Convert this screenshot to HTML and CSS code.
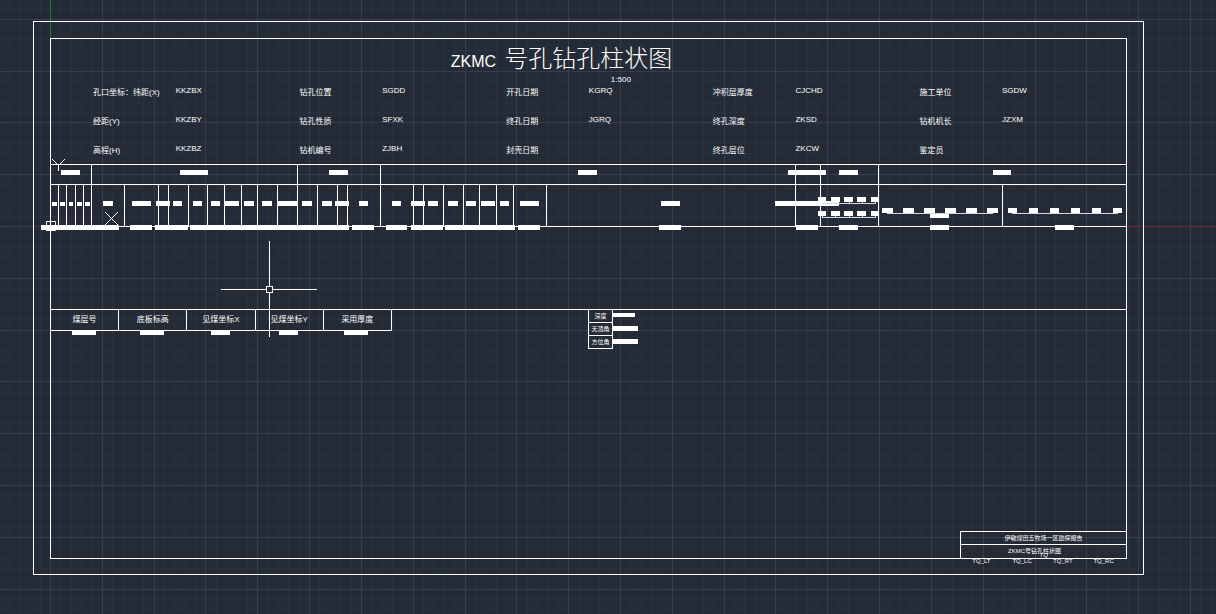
FILE: index.html
```html
<!DOCTYPE html>
<html lang="zh-CN">
<head>
<meta charset="utf-8">
<meta name="viewport" content="width=device-width, initial-scale=1">
<title>ZKMC 号孔钻孔柱状图</title>
<link rel="stylesheet" href="styles.css">
</head>
<body>
<svg class="grid" aria-hidden="true">
  <path class="grid-minor"/>
  <path class="grid-major"/>
  <path class="axis-y" d="M50.5 0V39"/>
  <path class="axis-x" d="M1127 226.5H4000"/>
</svg>
<main class="sheet">
  <div class="frame">
    <header class="heading">
      <h1 class="title"><span class="title-code">ZKMC</span><span class="title-name">号孔钻孔柱状图</span></h1>
      <p class="scale">1:500</p>
    </header>
    <dl class="info">
      <div class="field"><dt>孔口坐标：纬距(X)</dt><dd>KKZBX</dd></div>
      <div class="field"><dt>经距(Y)</dt><dd>KKZBY</dd></div>
      <div class="field"><dt>高程(H)</dt><dd>KKZBZ</dd></div>
      <div class="field"><dt>钻孔位置</dt><dd>SGDD</dd></div>
      <div class="field"><dt>钻孔性质</dt><dd>SFXK</dd></div>
      <div class="field"><dt>钻机编号</dt><dd>ZJBH</dd></div>
      <div class="field"><dt>开孔日期</dt><dd>KGRQ</dd></div>
      <div class="field"><dt>终孔日期</dt><dd>JGRQ</dd></div>
      <div class="field"><dt>封壳日期</dt><dd></dd></div>
      <div class="field"><dt>冲积层厚度</dt><dd>CJCHD</dd></div>
      <div class="field"><dt>终孔深度</dt><dd>ZKSD</dd></div>
      <div class="field"><dt>终孔层位</dt><dd>ZKCW</dd></div>
      <div class="field"><dt>施工单位</dt><dd>SGDW</dd></div>
      <div class="field"><dt>钻机机长</dt><dd>JZXM</dd></div>
      <div class="field"><dt>鉴定员</dt><dd></dd></div>
    </dl>
    <svg class="log" viewBox="51 159 1075 73" aria-hidden="true">
      <!-- horizontal rules and group dividers -->
      <path class="rule" d="M51 164.5H1126M51 184.5H1126M51 226.5H1126M91.5 165V226M297.5 165V226M380.5 165V226M795.5 165V226M820.5 165V226M878.5 165V226"/>
      <!-- column dividers -->
      <path class="rule" d="M58.5 185V226M66.5 185V226M75.5 185V226M83.5 185V226M124.5 185V226M158.5 185V226M168.5 185V226M188.5 185V226M207.5 185V226M224.5 185V226M241.5 185V226M257.5 185V226M277.5 185V226M317.5 185V226M337.5 185V226M347.5 185V226M413.5 185V226M423.5 185V226M443.5 185V226M463.5 185V226M479.5 185V226M496.5 185V226M513.5 185V226M546.5 185V226M1002.5 185V226"/>
      <!-- group marks -->
      <path class="mark" d="M61 172.5h19M180 172.5h28M329 172.5h19M578 172.5h19M788 172.5h38M839 172.5h19M993 172.5h18"/>
      <!-- column marks -->
      <path class="mark-small" d="M52 204h5M60 204h5M69 204h4M77 204h5M85 204h5"/>
      <path class="mark" d="M103 203.5h10M132 203.5h19M156 203.5h14M173 203.5h9M193 203.5h9M211 203.5h9M225 203.5h14M244 203.5h10M262 203.5h10M278 203.5h19M302 203.5h10M322 203.5h10M335 203.5h14M359 203.5h9M392 203.5h9M411 203.5h14M428 203.5h10M448 203.5h10M466 203.5h10M481 203.5h14M500 203.5h9M520 203.5h19M661 203.5h19M775 203.5h64"/>
      <!-- base marks -->
      <path class="mark" d="M41 227.5h78M130 227.5h22M155 227.5h33M190 227.5h159M352 227.5h22M386 227.5h21M411 227.5h32M445 227.5h70M518 227.5h22M659 227.5h22M796 227.5h22M839 227.5h19M930 227.5h19M1055 227.5h19"/>
      <!-- curve scales -->
      <path class="mark" d="M818 199.5h8M831 199.5h9M844 199.5h9M857 199.5h9M871 199.5h8M818 213.5h8M831 213.5h9M844 213.5h9M857 213.5h9M871 213.5h8M882 210.5h11M903 210.5h11M924 210.5h11M945 210.5h11M966 210.5h11M987 210.5h11M930 215.5h19M1008 210.5h9M1029 210.5h9M1050 210.5h9M1071 210.5h9M1092 210.5h9M1113 210.5h9"/>
      <path class="scale-line" d="M822 203.5H876M835.5 202v2M849.5 202v2M862.5 202v2M875.5 202v2M822 217.5H876M822.5 216v2M835.5 216v2M849.5 216v2M862.5 216v2M875.5 216v2M887 213.5H993M1012 213.5H1118"/>
      <!-- UCS icon -->
      <path class="ucs" d="M52 159L58.5 165.5L65 159M58.5 165V171M105 212L118 225M118 212L105 225M46.5 221.5H55.5V230.5H46.5Z"/>
    </svg>
    <section class="lower">
      <table class="seams">
        <tr>
          <th>煤层号<i class="bar bar-wide"></i></th>
          <th>底板标高<i class="bar bar-wide"></i></th>
          <th>见煤坐标X<i class="bar"></i></th>
          <th>见煤坐标Y<i class="bar"></i></th>
          <th>采用厚度<i class="bar bar-wide"></i></th>
        </tr>
      </table>
      <table class="survey">
        <tr><th>深度</th><td><i class="reading reading-depth"></i></td></tr>
        <tr><th>天顶角</th><td><i class="reading"></i></td></tr>
        <tr><th>方位角</th><td><i class="reading"></i></td></tr>
      </table>
    </section>
    <footer class="stamp">
      <p class="stamp-row">伊敏煤田五牧场一区勘探报告</p>
      <p class="stamp-row stamp-name">ZKMC号钻孔柱状图<span class="stamp-tag">TQ</span></p>
      <div class="anchors"><span>TQ_LT</span><span>TQ_LC</span><span>TQ_RT</span><span>TQ_RC</span></div>
    </footer>
  </div>
</main>
<svg class="cursor" viewBox="0 0 96 96" aria-hidden="true">
  <path d="M0 48.5H45M52 48.5H96M48.5 0V45M48.5 52V96M45.5 45.5H51.5V51.5H45.5Z"/>
</svg>
<script src="grid.js"></script>
</body>
</html>
```
FILE: styles.css
```css
* {
  box-sizing: border-box;
}

body {
  margin: 0;
  position: relative;
  min-height: 100vh;
  display: flex;
  background: #242b36;
  color: #fff;
  font-family: "Liberation Sans", "Noto Sans CJK SC", sans-serif;
  font-size: 8px;
  line-height: 12px;
}

h1, p, dl, dd {
  margin: 0;
  font-weight: 400;
}

.grid {
  position: absolute;
  inset: 0;
  width: 100%;
  height: 100%;
  z-index: -1;
}

.grid path {
  fill: none;
  shape-rendering: crispEdges;
}

.grid-minor { stroke: #29313d; }
.grid-major { stroke: #363e4e; }
.grid .axis-y { stroke: #217a2b; }
.grid .axis-x { stroke: #6c2833; }

.sheet {
  flex: 1;
  min-width: 0;
  display: flex;
  margin: 21px 72px 39px 33px;
  padding: 16px 16px 15px;
  border: 1px solid #fff;
}

.frame {
  flex: 1;
  min-width: 0;
  display: flex;
  flex-direction: column;
  border: 1px solid #fff;
}

.heading {
  align-self: center;
  padding-right: 54px;
}

.title {
  display: flex;
  align-items: baseline;
  gap: 8px;
  height: 36px;
  line-height: 40px;
}

.title-code { font-size: 16px; }

.title-name {
  font-size: 24px;
  font-weight: 300;
}

.scale {
  margin-left: 160px;
  height: 10px;
  line-height: 10px;
}

.info {
  display: grid;
  grid-template-rows: repeat(3, 12px);
  grid-auto-flow: column;
  grid-auto-columns: 1fr;
  row-gap: 17px;
  padding-top: 1px;
  padding-left: 42px;
}

.field {
  display: grid;
  grid-template-columns: 2fr 3fr;
  align-items: start;
  white-space: nowrap;
}

.field dt { line-height: 14px; }
.field dd { line-height: 10px; }

.log {
  display: block;
  width: 100%;
  margin-top: 3px;
  overflow: visible;
}

.log path {
  fill: none;
  stroke: #fff;
  shape-rendering: crispEdges;
}

.log .mark { stroke-width: 5; }
.log .mark-small { stroke-width: 4; }
.log .scale-line { stroke: #d5d9e0; }

.log .ucs { shape-rendering: auto; }

.lower {
  display: flex;
  align-items: flex-start;
  margin-top: 77px;
  border-top: 1px solid #fff;
}

table {
  border-collapse: separate;
  border-spacing: 0;
  table-layout: fixed;
}

th, td {
  padding: 0;
  font-weight: 400;
  text-align: center;
  white-space: nowrap;
}

.seams { width: 341px; }

.seams th {
  position: relative;
  height: 21px;
  border: solid #fff;
  border-width: 0 1px 1px 0;
}

.bar {
  position: absolute;
  top: 21px;
  left: 50%;
  width: 19px;
  height: 4px;
  margin-left: -10px;
  background: #fff;
}

.bar-wide {
  width: 24px;
  margin-left: -13px;
}

.survey {
  margin-left: 196px;
  font-size: 6px;
  line-height: 12px;
}

.survey th {
  width: 25px;
  height: 13px;
  border: solid #fff;
  border-width: 0 1px 1px;
}

.survey td {
  padding-top: 3px;
  vertical-align: top;
}

.reading {
  display: block;
  width: 25px;
  height: 5px;
  background: #fff;
}

.reading-depth {
  width: 22px;
  height: 4px;
}

.stamp {
  position: relative;
  width: 166px;
  margin-top: auto;
  margin-left: auto;
  border: solid #fff;
  border-width: 1px 0 0 1px;
  font-size: 6px;
  line-height: 12px;
  text-align: center;
}

.stamp-name {
  position: relative;
  height: 14px;
  padding-right: 18px;
  border-top: 1px solid #fff;
}

.stamp-tag {
  position: absolute;
  top: 4px;
  left: 50%;
  margin-left: -4px;
}

.anchors {
  position: absolute;
  top: 100%;
  left: 0;
  width: 100%;
  display: grid;
  grid-template-columns: repeat(4, 1fr);
  padding-right: 2px;
  line-height: 6px;
}

.cursor {
  position: absolute;
  left: 221px;
  top: 241px;
  width: 96px;
  height: 96px;
}

.cursor path {
  fill: none;
  stroke: #fff;
  shape-rendering: crispEdges;
}
```
FILE: grid.js
```js
// Drafting grid: ten-pixel minor lines, every fifth one major, through the origin.
const ORIGIN = { x: 50, y: 226 };
const STEP = 10.364;

function drawGrid() {
  const w = document.documentElement.clientWidth;
  const h = document.documentElement.scrollHeight;
  let minor = '';
  let major = '';
  const add = (i, line) => {
    if (i % 5 === 0) major += line;
    else minor += line;
  };
  for (let i = Math.ceil(-ORIGIN.x / STEP); ORIGIN.x + i * STEP < w; i++) {
    add(i, `M${Math.round(ORIGIN.x + i * STEP) + 0.5} 0V${h}`);
  }
  for (let i = Math.ceil(-ORIGIN.y / STEP); ORIGIN.y + i * STEP < h; i++) {
    add(i, `M0 ${Math.round(ORIGIN.y + i * STEP) + 0.5}H${w}`);
  }
  document.querySelector('.grid-minor').setAttribute('d', minor);
  document.querySelector('.grid-major').setAttribute('d', major);
}

drawGrid();
window.addEventListener('resize', drawGrid);
```
